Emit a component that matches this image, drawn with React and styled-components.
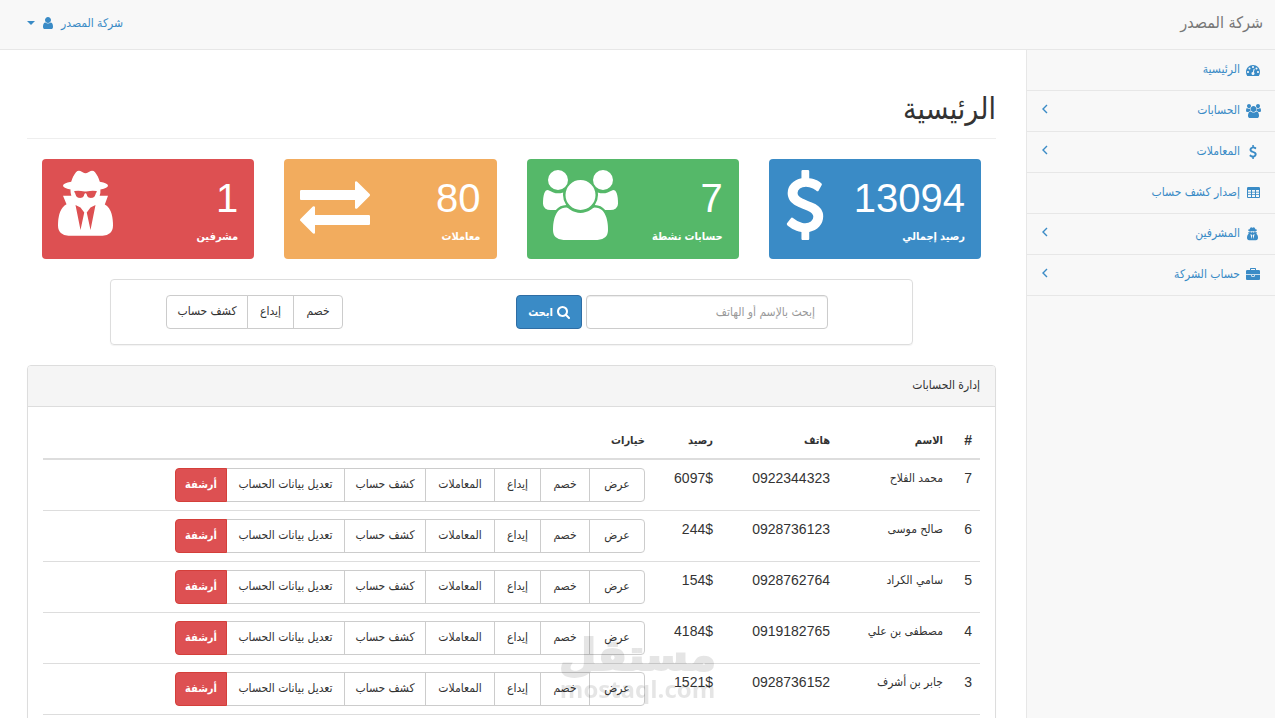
import React from "react";
import styled, { createGlobalStyle } from "styled-components";

const blue = "#3a8bc6";
const latin = '"Liberation Sans", "DejaVu Sans Condensed", "DejaVu Sans", sans-serif';

const GlobalStyle = createGlobalStyle`
  *, *::before, *::after { box-sizing: border-box; }
  html { scrollbar-width: none; }
  body {
    margin: 0;
    background: #fff;
    color: #333;
    font-family: ${latin};
    font-size: 12px;
    line-height: 20px;
  }
  button, input { font: inherit; }
  a { color: ${blue}; text-decoration: none; }
`;

const Page = styled.div`
  min-height: 100vh;
  display: flex;
  flex-direction: column;
`;

const TopBar = styled.header`
  display: flex;
  align-items: center;
  justify-content: space-between;
  height: 50px;
  padding: 0 12px 4px 27px;
  background: #f8f8f8;
  border-bottom: 1px solid #e7e7e7;
`;

const Brand = styled.a`
  color: #777;
  font-size: 16px;
`;

const UserMenu = styled.button`
  display: flex;
  align-items: center;
  gap: 8px;
  padding: 0;
  border: 0;
  background: none;
  color: ${blue};
  cursor: pointer;
`;

const Caret = styled.span`
  border: 4px solid transparent;
  border-top-color: ${blue};
  border-bottom: 0;
`;

const Columns = styled.div`
  flex: 1;
  display: flex;
`;

const Sidebar = styled.nav`
  flex: 0 0 249px;
  background: #f8f8f8;
  border-left: 1px solid #e7e7e7;
`;

const Menu = styled.ul`
  margin: 0;
  padding: 0;
  list-style: none;
`;

const MenuLink = styled.a`
  display: flex;
  align-items: center;
  gap: 5px;
  height: 41px;
  padding: 0 14px 2px 15px;
  border-bottom: 1px solid #e7e7e7;
`;

const IconSlot = styled.span`
  display: flex;
  justify-content: center;
  width: 16px;
  padding-top: 2px;
`;

const Arrow = styled.svg`
  width: 6px;
  height: 10px;
  margin: 0 auto 3px 0;
`;

const Glyph = styled.svg`
  display: block;
  flex: none;
  height: ${(p) => p.$size}px;
  fill: currentColor;
`;

const Main = styled.main`
  flex: 1;
  min-width: 0;
  padding: 0 30px 0 27px;
`;

const Title = styled.h1`
  margin: 40px 0 20px;
  padding-bottom: 11px;
  border-bottom: 1px solid #eee;
  font-size: 30px;
  font-weight: 400;
  line-height: 37px;
`;

const Cards = styled.section`
  display: grid;
  grid-template-columns: repeat(4, 1fr);
  gap: 30px;
  padding: 0 15px;
`;

const Card = styled.article`
  display: flex;
  justify-content: space-between;
  height: 100px;
  padding: 11px 16px;
  border-radius: 4px;
  background: ${(p) => p.$color};
  color: #fff;
`;

const Figure = styled.div`
  font-size: 40px;
  line-height: 57px;
`;

const Caption = styled.div`
  font-size: 11px;
  font-weight: 700;
  line-height: 18px;
`;

const SearchPanel = styled.form`
  display: flex;
  justify-content: space-between;
  margin: 20px 83px;
  padding: 15px 84px 15px 55px;
  border: 1px solid #ddd;
  border-radius: 4px;
  box-shadow: 0 1px 1px rgba(0, 0, 0, 0.05);
`;

const SearchGroup = styled.div`
  display: flex;
  gap: 4px;
`;

const SearchInput = styled.input`
  width: 242px;
  height: 34px;
  padding: 6px 12px;
  border: 1px solid #ccc;
  border-radius: 4px;
  box-shadow: inset 0 1px 1px rgba(0, 0, 0, 0.075);
  color: #555;
  &::placeholder { color: #999; opacity: 1; }
`;

const SearchButton = styled.button`
  display: flex;
  align-items: center;
  justify-content: center;
  gap: 4px;
  width: 66px;
  height: 34px;
  padding: 0;
  border: 1px solid #2e6da4;
  border-radius: 4px;
  background: ${blue};
  color: #fff;
  font-size: 11px;
  font-weight: 700;
`;

const ButtonGroup = styled.div`
  display: flex;
`;

const GroupButton = styled.button`
  width: ${(p) => p.$width}px;
  height: 34px;
  padding: 0 0 2px;
  border: 1px solid ${(p) => (p.$danger ? "#d43f3a" : "#ccc")};
  background: ${(p) => (p.$danger ? "#dd5052" : "#fff")};
  color: ${(p) => (p.$danger ? "#fff" : "#333")};
  font-size: ${(p) => (p.$danger ? 11 : 12)}px;
  font-weight: ${(p) => (p.$danger ? 700 : 400)};
  white-space: nowrap;
  cursor: pointer;
  & + & { margin-right: -1px; }
  &:first-child { border-radius: 0 4px 4px 0; }
  &:last-child { border-radius: 4px 0 0 4px; }
`;

const Panel = styled.section`
  border: 1px solid #ddd;
  border-radius: 4px;
  box-shadow: 0 1px 1px rgba(0, 0, 0, 0.05);
`;

const PanelHeading = styled.h2`
  margin: 0;
  padding: 9px 15px 11px;
  border-bottom: 1px solid #ddd;
  border-radius: 3px 3px 0 0;
  background: #f5f5f5;
  font-size: 12px;
  font-weight: 400;
`;

const PanelBody = styled.div`
  padding: 15px;
`;

const Table = styled.table`
  width: 100%;
  table-layout: fixed;
  border-spacing: 0;
`;

const Col = styled.col`
  width: ${(p) => (p.$width ? p.$width + "px" : "auto")};
`;

const HeadCell = styled.th`
  height: 38px;
  padding: 8px;
  border-bottom: 2px solid #ddd;
  font-size: ${(p) => (p.$number ? 14 : 11)}px;
  text-align: right;
`;

const Cell = styled.td`
  padding: 8px;
  border-bottom: 1px solid #ddd;
  vertical-align: top;
  font-size: ${(p) => (p.$number ? 14 : 12)}px;
`;

const Watermark = styled.div`
  position: fixed;
  right: 0;
  bottom: 13px;
  left: 0;
  display: flex;
  flex-direction: column;
  align-items: center;
  color: #000;
  font-weight: 700;
  opacity: 0.1;
  pointer-events: none;
`;

const WatermarkLogo = styled.span`
  font-family: "DejaVu Sans", sans-serif;
  font-size: 43px;
  line-height: 36px;
  -webkit-text-stroke: 2px #000;
`;

const WatermarkSite = styled.span`
  font-family: "Open Sans", sans-serif;
  font-size: 24px;
  line-height: 32px;
`;

const glyphs = {
  dashboard: [1792, "M384 1152q0-53-37.5-90.5t-90.5-37.5-90.5 37.5-37.5 90.5 37.5 90.5 90.5 37.5 90.5-37.5 37.5-90.5zm192-448q0-53-37.5-90.5t-90.5-37.5-90.5 37.5-37.5 90.5 37.5 90.5 90.5 37.5 90.5-37.5 37.5-90.5zm428 481l101-382q6-26-7.5-48.5t-38.5-29.5-48 6.5-30 39.5l-101 382q-60 5-107 43.5t-63 98.5q-20 77 20 146t117 89 146-20 89-117q16-60-6-117t-72-91zm660-33q0-53-37.5-90.5t-90.5-37.5-90.5 37.5-37.5 90.5 37.5 90.5 90.5 37.5 90.5-37.5 37.5-90.5zm-640-640q0-53-37.5-90.5t-90.5-37.5-90.5 37.5-37.5 90.5 37.5 90.5 90.5 37.5 90.5-37.5 37.5-90.5zm448 192q0-53-37.5-90.5t-90.5-37.5-90.5 37.5-37.5 90.5 37.5 90.5 90.5 37.5 90.5-37.5 37.5-90.5zm320 448q0 261-141 483-19 29-54 29h-1402q-35 0-54-29-141-221-141-483 0-182 71-348t191-286 286-191 348-71 348 71 286 191 191 286 71 348z"],
  users: [1920, "M593 896q-162 5-265 128h-134q-82 0-138-40.5t-56-118.5q0-353 124-353 6 0 43.5 21t97.5 42.5 119 21.5q67 0 133-23-5 37-5 66 0 139 81 256zm1071 637q0 120-73 189.5t-194 69.5h-874q-121 0-194-69.5t-73-189.5q0-53 3.5-103.5t14-109 26.5-108.5 43-97.5 62-81 85.5-53.5 111.5-20q10 0 43 21.5t73 48 107 48 135 21.5 135-21.5 107-48 73-48 43-21.5q61 0 111.5 20t85.5 53.5 62 81 43 97.5 26.5 108.5 14 109 3.5 103.5zm-1024-1277q0 106-75 181t-181 75-181-75-75-181 75-181 181-75 181 75 75 181zm704 384q0 159-112.5 271.5t-271.5 112.5-271.5-112.5-112.5-271.5 112.5-271.5 271.5-112.5 271.5 112.5 112.5 271.5zm576 225q0 78-56 118.5t-138 40.5h-134q-103-123-265-128 81-117 81-256 0-29-5-66 66 23 133 23 59 0 119-21.5t97.5-42.5 43.5-21q124 0 124 353zm-128-609q0 106-75 181t-181 75-181-75-75-181 75-181 181-75 181 75 75 181z"],
  dollar: [1024, "M978 1185q0 153-99.5 263.5t-258.5 136.5v175q0 14-9 23t-23 9h-135q-13 0-22.5-9.5t-9.5-22.5v-175q-66-9-127.5-31t-101.5-44.5-74-48-46.5-37.5-17.5-18q-17-21-2-41l103-135q7-10 23-12 15-2 24 9l2 2q113 99 243 125 37 8 74 8 81 0 142.5-43t61.5-122q0-28-15-53t-33.5-42-58.5-37.5-66-32-80-32.5q-39-16-61.5-25t-61.5-26.5-62.5-31-56.5-35.5-53.5-42.5-43.5-49-35.5-58-21-66.5-8.5-78q0-138 98-242t255-134v-180q0-13 9.5-22.5t22.5-9.5h135q14 0 23 9t9 23v176q57 6 110.5 23t87 33.5 63.5 37.5 39 29 15 14q17 18 5 38l-81 146q-8 15-23 16-14 3-27-7-3-3-14.5-12t-39-26.5-58.5-32-74.5-26-85.5-11.5q-95 0-155 43t-60 111q0 26 8.5 48t29.5 41.5 39.5 33 56 31 60.5 27 70 27.5q53 20 81 31.5t76 35 75.5 42.5 62 50 53 63.5 31.5 76.5 13 94z"],
  table: [1664, "M160 128h1344q66 0 113 47t47 113v1088q0 66-47 113t-113 47h-1344q-66 0-113-47t-47-113v-1088q0-66 47-113t113-47zM160 512q-32 0-32 32v160q0 32 32 32h320q32 0 32-32v-160q0-32-32-32zM672 512q-32 0-32 32v160q0 32 32 32h320q32 0 32-32v-160q0-32-32-32zM1184 512q-32 0-32 32v160q0 32 32 32h320q32 0 32-32v-160q0-32-32-32zM160 832q-32 0-32 32v160q0 32 32 32h320q32 0 32-32v-160q0-32-32-32zM672 832q-32 0-32 32v160q0 32 32 32h320q32 0 32-32v-160q0-32-32-32zM1184 832q-32 0-32 32v160q0 32 32 32h320q32 0 32-32v-160q0-32-32-32zM160 1152q-32 0-32 32v192q0 32 32 32h320q32 0 32-32v-192q0-32-32-32zM672 1152q-32 0-32 32v192q0 32 32 32h320q32 0 32-32v-192q0-32-32-32zM1184 1152q-32 0-32 32v192q0 32 32 32h320q32 0 32-32v-192q0-32-32-32z"],
  agent: [1664, "M704 1536l96-448-96-128-128-64zm256 0l128-640-128 64-96 128zm160-992q-2-4-4-6-10-8-96-8-70 0-167 19-7 2-21 2t-21-2q-97-19-167-19-86 0-96 8-2 2-4 6 2 18 4 27 2 3 7.5 6.5t7.5 10.5q2 4 7.5 20.5t7 20.5 7.5 17 8.5 17 9 14 12 13.5 14 9.5 17.5 8 20.5 4 24.5 2q36 0 59-12.5t32.5-30 14.5-34.5 11.5-29.5 17.5-12.5h12q11 0 17.5 12.5t11.5 29.5 14.5 34.5 32.5 30 59 12.5q13 0 24.5-2t20.5-4 17.5-8 14-9.5 12-13.5 9-14 8.5-17 7.5-17 7-20.5 7.5-20.5q2-7 7.5-10.5t7.5-6.5q2-9 4-27zm416 879q0 121-73 190t-194 69h-874q-121 0-194-69t-73-190q0-61 4.5-118t19-125.5 37.5-123.5 63.5-103.5 93.5-74.5l-90-220h214q-22-64-22-128 0-12 2-32-194-40-194-96 0-57 210-99 17-62 51.5-134t70.5-114q32-37 76-37 30 0 84 31t84 31 84-31 84-31q44 0 76 37 36 42 70.5 114t51.5 134q210 42 210 99 0 56-194 96 7 81-20 160h214l-82 225q63 33 107.5 96.5t65.5 143.5 29 151.5 8 148.5z", 128],
  briefcase: [1792, "M640 256h512v-128h-512v128zm1152 640v480q0 66-47 113t-113 47h-1472q-66 0-113-47t-47-113v-480h672v160q0 26 19 45t45 19h320q26 0 45-19t19-45v-160h672zm-768 0v128h-256v-128h256zm768-480v384h-1792v-384q0-66 47-113t113-47h352v-160q0-40 28-68t68-28h576q40 0 68 28t28 68v160h352q66 0 113 47t47 113z"],
  exchange: [1792, "M1792 1184v192q0 13-9.5 22.5t-22.5 9.5h-1376v192q0 13-9.5 22.5t-22.5 9.5q-12 0-24-10l-319-320q-9-9-9-22 0-14 9-23l320-320q9-9 23-9 13 0 22.5 9.5t9.5 22.5v192h1376q13 0 22.5 9.5t9.5 22.5zm0-544q0 14-9 23l-320 320q-9 9-23 9-13 0-22.5-9.5t-9.5-22.5v-192h-1376q-13 0-22.5-9.5t-9.5-22.5v-192q0-13 9.5-22.5t22.5-9.5h1376v-192q0-14 9-23t23-9q12 0 24 10l319 319q9 9 9 23z"],
  user: [1536, "M1536 1399q0 109-62.5 187t-150.5 78h-854q-88 0-150.5-78t-62.5-187q0-85 8.5-160.5t31.5-152 58.5-131 94-89 134.5-34.5q131 128 313 128t313-128q76 0 134.5 34.5t94 89 58.5 131 31.5 152 8.5 160.5zm-256-887q0 159-112.5 271.5t-271.5 112.5-271.5-112.5-112.5-271.5 112.5-271.5 271.5-112.5 271.5 112.5 112.5 271.5z", 256],
  search: [1728, "M1216 832q0-185-131.5-316.5t-316.5-131.5-316.5 131.5-131.5 316.5 131.5 316.5 316.5 131.5 316.5-131.5 131.5-316.5zm512 832q0 52-38 90t-90 38q-54 0-90-38l-343-342q-179 124-399 124-143 0-273.5-55.5t-225-150-150-225-55.5-273.5 55.5-273.5 150-225 225-150 273.5-55.5 273.5 55.5 225 150 150 225 55.5 273.5q0 220-124 399l343 343q37 37 37 90z", 64],
};

function Icon({ name, size = 14 }) {
  const [end, path, start = 0] = glyphs[name];
  return (
    <Glyph $size={size} viewBox={`${start} 0 ${end - start} 1792`} aria-hidden="true">
      <path fillRule={name === "table" ? "evenodd" : "nonzero"} d={path} />
    </Glyph>
  );
}

const menu = [
  { icon: "dashboard", label: "الرئيسية" },
  { icon: "users", label: "الحسابات", nested: true },
  { icon: "dollar", label: "المعاملات", nested: true },
  { icon: "table", label: "إصدار كشف حساب" },
  { icon: "agent", label: "المشرفين", nested: true },
  { icon: "briefcase", label: "حساب الشركة", nested: true },
];

const cards = [
  { color: "#3a8bc6", icon: "dollar", value: "13094", label: "رصيد إجمالي" },
  { color: "#55b869", icon: "users", value: "7", label: "حسابات نشطة" },
  { color: "#f2ac5e", icon: "exchange", value: "80", label: "معاملات" },
  { color: "#dd5052", icon: "agent", value: "1", label: "مشرفين" },
];

const withdraw = { label: "خصم", width: 50 };
const deposit = { label: "إيداع", width: 47 };
const statement = { label: "كشف حساب", width: 82 };

const quickActions = [withdraw, deposit, statement];

const rowActions = [
  { label: "عرض", width: 56 },
  withdraw,
  deposit,
  { label: "المعاملات", width: 70 },
  statement,
  { label: "تعديل بيانات الحساب", width: 119 },
  { label: "أرشفة", width: 52, danger: true },
];

const accounts = [
  { id: 7, name: "محمد الفلاح", phone: "0922344323", balance: "6097$" },
  { id: 6, name: "صالح موسى", phone: "0928736123", balance: "244$" },
  { id: 5, name: "سامي الكراد", phone: "0928762764", balance: "154$" },
  { id: 4, name: "مصطفى بن علي", phone: "0919182765", balance: "4184$" },
  { id: 3, name: "جابر بن أشرف", phone: "0928736152", balance: "1521$" },
];

function Actions({ items }) {
  return (
    <ButtonGroup>
      {items.map((a) => (
        <GroupButton type="button" key={a.label} $width={a.width} $danger={a.danger}>
          {a.label}
        </GroupButton>
      ))}
    </ButtonGroup>
  );
}

export default function App() {
  return (
    <Page dir="rtl" lang="ar">
      <GlobalStyle />
      <TopBar>
        <Brand href="#">شركة المصدر</Brand>
        <UserMenu type="button">
          شركة المصدر
          <Icon name="user" />
          <Caret />
        </UserMenu>
      </TopBar>
      <Columns>
        <Sidebar>
          <Menu>
            {menu.map((m) => (
              <li key={m.label}>
                <MenuLink href="#">
                  <IconSlot><Icon name={m.icon} /></IconSlot>
                  {m.label}
                  {m.nested && (
                    <Arrow viewBox="0 0 6 10" fill="none" stroke="currentColor" strokeWidth="1.4" aria-hidden="true">
                      <path d="M5 1L1 5l4 4" />
                    </Arrow>
                  )}
                </MenuLink>
              </li>
            ))}
          </Menu>
        </Sidebar>
        <Main>
          <Title>الرئيسية</Title>
          <Cards>
            {cards.map((c) => (
              <Card key={c.label} $color={c.color}>
                <div>
                  <Figure>{c.value}</Figure>
                  <Caption>{c.label}</Caption>
                </div>
                <Icon name={c.icon} size={70} />
              </Card>
            ))}
          </Cards>
          <SearchPanel>
            <SearchGroup>
              <SearchInput type="text" aria-label="إبحث بالإسم أو الهاتف" placeholder="إبحث بالإسم أو الهاتف" />
              <SearchButton type="button">
                <Icon name="search" />
                ابحث
              </SearchButton>
            </SearchGroup>
            <Actions items={quickActions} />
          </SearchPanel>
          <Panel>
            <PanelHeading>إدارة الحسابات</PanelHeading>
            <PanelBody>
              <Table>
                <colgroup>
                  <Col $width={29} />
                  <Col $width={113} />
                  <Col $width={117} />
                  <Col $width={68} />
                  <Col />
                </colgroup>
                <thead>
                  <tr>
                    <HeadCell $number>#</HeadCell>
                    <HeadCell>الاسم</HeadCell>
                    <HeadCell>هاتف</HeadCell>
                    <HeadCell>رصيد</HeadCell>
                    <HeadCell>خيارات</HeadCell>
                  </tr>
                </thead>
                <tbody>
                  {accounts.map((a) => (
                    <tr key={a.id}>
                      <Cell $number>{a.id}</Cell>
                      <Cell>{a.name}</Cell>
                      <Cell $number>{a.phone}</Cell>
                      <Cell $number>{a.balance}</Cell>
                      <Cell><Actions items={rowActions} /></Cell>
                    </tr>
                  ))}
                </tbody>
              </Table>
            </PanelBody>
          </Panel>
        </Main>
      </Columns>
      <Watermark>
        <WatermarkLogo>مستقل</WatermarkLogo>
        <WatermarkSite dir="ltr">mostaql.com</WatermarkSite>
      </Watermark>
    </Page>
  );
}
